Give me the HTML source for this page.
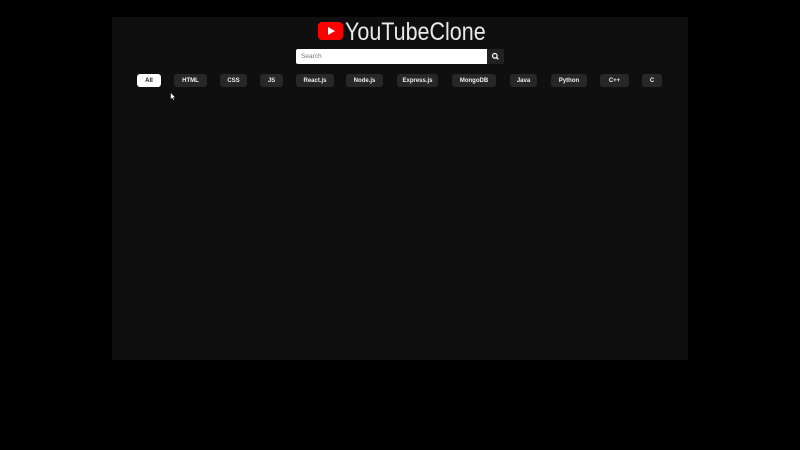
<!DOCTYPE html>
<html><head><meta charset="utf-8"><style>
html,body{margin:0;padding:0;background:#000;width:800px;height:450px;overflow:hidden;font-family:"Liberation Sans",sans-serif}
.panel{position:absolute;left:112px;top:17px;width:576px;height:343px;background:#0f0f0f}
.logo{position:absolute;left:318px;top:22px}
.title{position:absolute;left:345px;top:17px;font-size:25px;color:#eaeaea;font-weight:300;line-height:30px;transform:scaleX(0.86);transform-origin:left top;white-space:nowrap}
.search{position:absolute;left:296px;top:49px;width:191px;height:15px;background:#fff;border-radius:2px 0 0 2px}
.search span{position:absolute;left:5px;top:4px;font-size:6.5px;color:#777}
.sbtn{position:absolute;left:487px;top:49px;width:17px;height:15px;background:#222;border-radius:0 2px 2px 0}
.chip{position:absolute;top:74px;height:13px;background:#272727;border-radius:3px;color:#f1f1f1;font-size:6px;font-weight:bold;text-align:center;line-height:14px}
.chip.on{background:#fff;color:#0f0f0f}
</style></head><body>
<div class="panel"></div>
<svg class="logo" width="25" height="18" viewBox="0 0 25 18"><rect x="0" y="0" width="25" height="18" rx="4" fill="#ff0000"/><path d="M10 5 L17 9 L10 13 Z" fill="#fff"/></svg>
<div class="title">YouTubeClone</div>
<div class="search"><span>Search</span></div>
<div class="sbtn"><svg width="17" height="15" viewBox="0 0 17 15"><circle cx="7.8" cy="6.8" r="2.3" fill="none" stroke="#fff" stroke-width="1.2"/><path d="M9.5 8.5 L11.3 10.3" stroke="#fff" stroke-width="1.4"/></svg></div>
<div class="chip on" style="left:137px;width:24px">All</div>
<div class="chip" style="left:174px;width:33px">HTML</div>
<div class="chip" style="left:220px;width:27px">CSS</div>
<div class="chip" style="left:260px;width:23px">JS</div>
<div class="chip" style="left:296px;width:38px">React.js</div>
<div class="chip" style="left:346px;width:37px">Node.js</div>
<div class="chip" style="left:397px;width:41px">Express.js</div>
<div class="chip" style="left:452px;width:44px">MongoDB</div>
<div class="chip" style="left:510px;width:27px">Java</div>
<div class="chip" style="left:551px;width:36px">Python</div>
<div class="chip" style="left:600px;width:29px">C++</div>
<div class="chip" style="left:642px;width:20px">C</div>
<svg style="position:absolute;left:170px;top:92px" width="6" height="9" viewBox="0 0 6 9"><path d="M0.5 0.5 L0.5 7.5 L2.2 6 L3.5 8.5 L4.5 8 L3.3 5.6 L5.5 5.5 Z" fill="#fff" stroke="#000" stroke-width="0.5"/></svg>
</body></html>
